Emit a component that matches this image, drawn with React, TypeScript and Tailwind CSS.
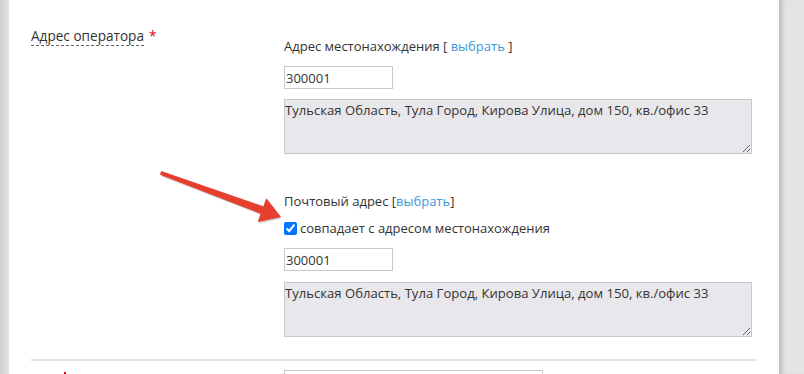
import React from "react";

const font = { fontFamily: "'Open Sans', 'Noto Sans', sans-serif" };

function Arrow() {
	return (
		<svg
			className="pointer-events-none absolute left-0 top-0"
			width="804"
			height="374"
			viewBox="0 0 804 374"
		>
			<polygon
				points="162.5,173.6 264.6,208.9 267.5,200.9 281.3,218.7 259.3,223.5 262.2,215.5 161.5,176.4"
				fill="#000"
				opacity="0.18"
			/>
			<polygon
				points="161.5,171.6 263.6,206.9 266.5,198.9 280.3,216.7 258.3,221.5 261.2,213.5 160.5,174.4"
				fill="#e5402f"
				stroke="#e5402f"
				strokeWidth="1"
				strokeLinejoin="round"
			/>
		</svg>
	);
}

function Textarea() {
	return (
		<textarea
			readOnly
			defaultValue="Тульская Область, Тула Город, Кирова Улица, дом 150, кв./офис 33"
			className="block h-[55px] w-[468px] border border-[#c8c8c8] bg-[#e8e8ec] px-0 py-px text-[13.1px] leading-[18px] text-[#333] outline-none"
			style={font}
		/>
	);
}

function Input({ value, w }: { value: string; w: string }) {
	return (
		<input
			readOnly
			defaultValue={value}
			className={`block h-[23px] ${w} border border-[#c8c8c8] bg-white px-px text-[13px] text-[#333] outline-none`}
			style={font}
		/>
	);
}

export default function App() {
	return (
		<div
			className="relative flex h-[374px] w-[804px] overflow-hidden text-[13px] leading-[18px] text-[#333]"
			style={font}
		>
			<div className="w-[9px] shrink-0 bg-gradient-to-r from-[#d0d0d0] to-[#e2e2e2]" />

			<div className="flex-1 bg-white px-[22px]">
				{/* Адрес оператора */}
				<div className="flex pt-[27px]">
					<div className="w-[253px] shrink-0">
						<span className="border-b border-dashed border-[#666] text-[13.6px]">
							Адрес оператора
						</span>
						<span className="ml-[5px] text-[13.6px] text-[#e00]">*</span>
					</div>
					<div className="pt-[10px]">
						<p>
							Адрес местонахождения [ <span className="text-[#3a9ad9]">выбрать</span> ]
						</p>
						<div className="mt-[11px]">
							<Input value="300001" w="w-[109px]" />
						</div>
						<div className="mt-[10px]">
							<Textarea />
						</div>

						<p className="mt-[38px]">
							Почтовый адрес [<span className="text-[#3a9ad9]">выбрать</span>]
						</p>
						<label className="mt-[9px] flex items-center gap-[3px]">
							<input
								type="checkbox"
								defaultChecked
								className="m-0 h-[13px] w-[13px] accent-[#0075ff]"
							/>
							<span>совпадает с адресом местонахождения</span>
						</label>
						<div className="mt-[11px]">
							<Input value="300001" w="w-[109px]" />
						</div>
						<div className="mt-[11px]">
							<Textarea />
						</div>
					</div>
				</div>

				<div className="mt-[22px] h-[2px] bg-[#e2e2e2]" />

				{/* следующее поле, видна только верхушка звёздочки */}
				<div className="flex pt-[7px]">
					<div className="w-[253px] shrink-0 pt-[4px] pl-[33px]">
						<div className="h-[3px] w-[2px] bg-[#e00]" />
					</div>
					<div className="pt-[2px]">
						<Input value="" w="w-[259px]" />
					</div>
				</div>
			</div>

			<div className="w-[25px] shrink-0 bg-[#e4e4e4] shadow-[inset_6px_0_5px_-3px_rgba(0,0,0,0.18)]" />

			<Arrow />
		</div>
	);
}
